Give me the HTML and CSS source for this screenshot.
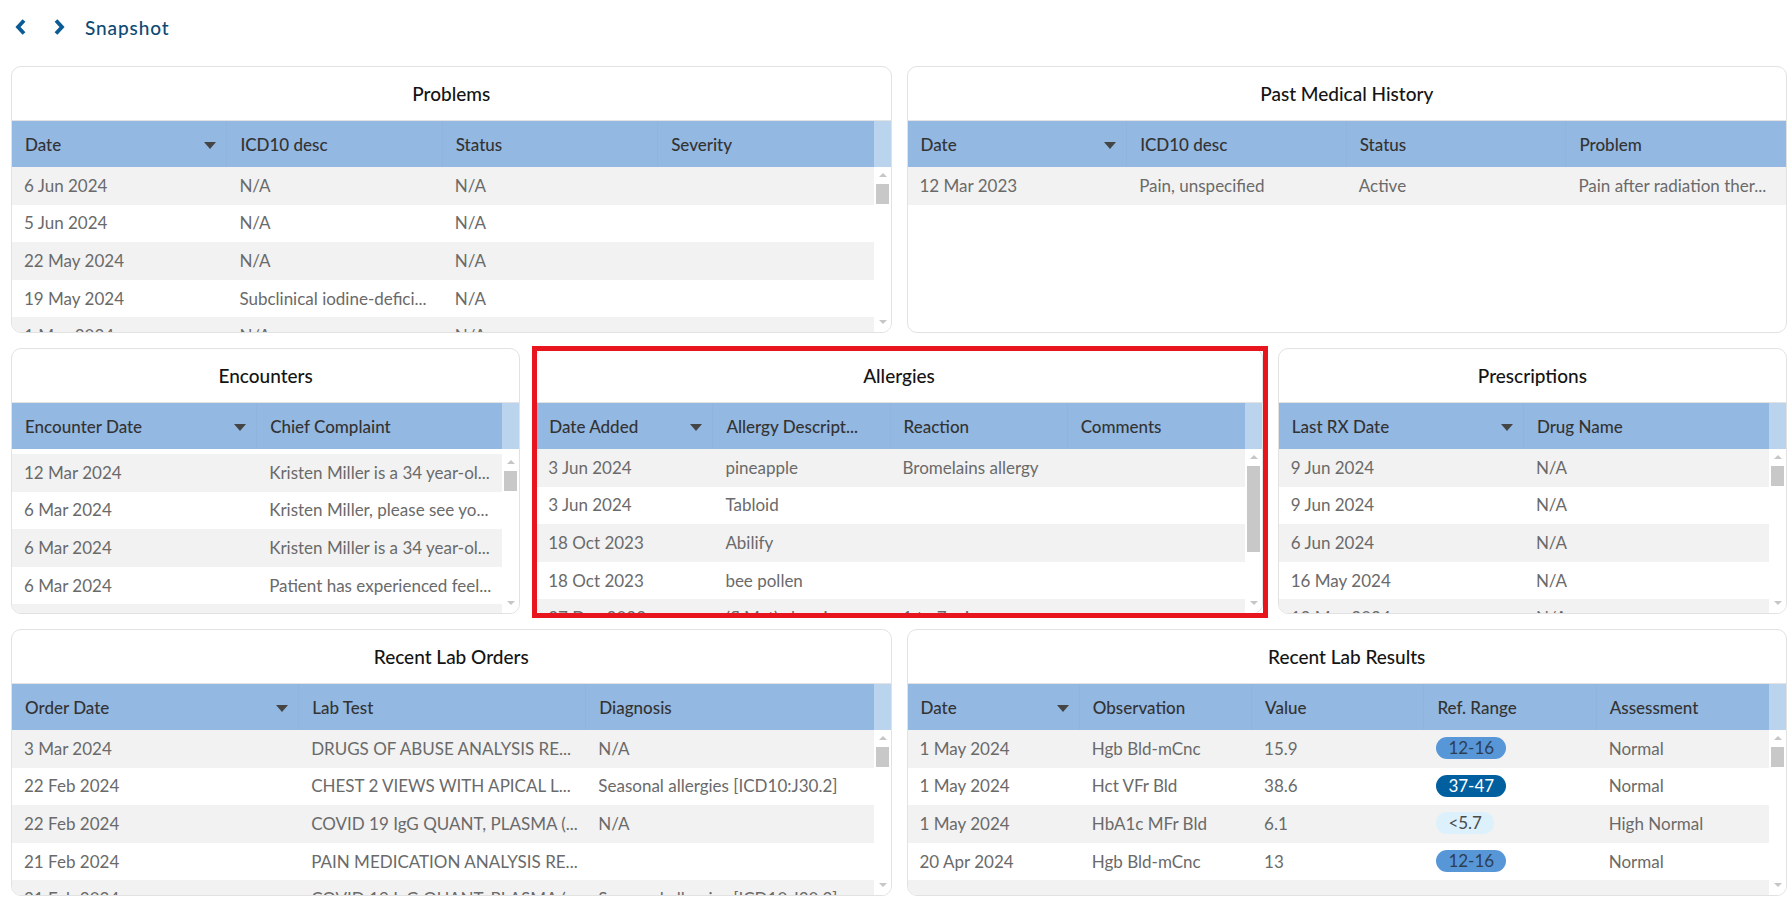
FILE: index.html
```html
<!DOCTYPE html>
<html lang="en">
<head>
<meta charset="utf-8">
<title>Snapshot</title>
<link rel="stylesheet" href="styles.css">
</head>
<body>
<div class="topbar">
  <svg class="chev" width="14" height="16" viewBox="0 0 14 16"><polyline points="10,1.5 4,8 10,14.5" fill="none" stroke="#0b5c94" stroke-width="3.8" stroke-linejoin="miter"/></svg>
  <svg class="chev" width="14" height="16" viewBox="0 0 14 16"><polyline points="4,1.5 10,8 4,14.5" fill="none" stroke="#0b5c94" stroke-width="3.8" stroke-linejoin="miter"/></svg>
  <span class="crumb">Snapshot</span>
</div>

<div class="board">
  <div class="row two">
    <section class="card">
      <h2 class="card-title">Problems</h2>
      <div class="thead">
        <div class="hcols c4">
          <div class="th sort">Date<i class="caret"></i></div>
          <div class="th">ICD10 desc</div>
          <div class="th">Status</div>
          <div class="th">Severity</div>
        </div>
        <div class="hsb"></div>
      </div>
      <div class="tbody">
        <div class="rows">
          <div class="tr c4"><div class="td">6 Jun 2024</div><div class="td">N/A</div><div class="td">N/A</div><div class="td"></div></div>
          <div class="tr c4"><div class="td">5 Jun 2024</div><div class="td">N/A</div><div class="td">N/A</div><div class="td"></div></div>
          <div class="tr c4"><div class="td">22 May 2024</div><div class="td">N/A</div><div class="td">N/A</div><div class="td"></div></div>
          <div class="tr c4"><div class="td">19 May 2024</div><div class="td">Subclinical iodine-defici...</div><div class="td">N/A</div><div class="td"></div></div>
          <div class="tr c4"><div class="td">1 May 2024</div><div class="td">N/A</div><div class="td">N/A</div><div class="td"></div></div>
        </div>
        <div class="vsb"><i class="up"></i><i class="thumb"></i><i class="down"></i></div>
      </div>
    </section>

    <section class="card">
      <h2 class="card-title">Past Medical History</h2>
      <div class="thead">
        <div class="hcols c4">
          <div class="th sort">Date<i class="caret"></i></div>
          <div class="th">ICD10 desc</div>
          <div class="th">Status</div>
          <div class="th">Problem</div>
        </div>
      </div>
      <div class="tbody">
        <div class="rows">
          <div class="tr c4"><div class="td">12 Mar 2023</div><div class="td">Pain, unspecified</div><div class="td">Active</div><div class="td">Pain after radiation ther...</div></div>
        </div>
      </div>
    </section>
  </div>

  <div class="row three">
    <section class="card">
      <h2 class="card-title">Encounters</h2>
      <div class="thead">
        <div class="hcols c2">
          <div class="th sort">Encounter Date<i class="caret"></i></div>
          <div class="th">Chief Complaint</div>
        </div>
        <div class="hsb"></div>
      </div>
      <div class="tbody gap-top">
        <div class="rows">
          <div class="tr c2"><div class="td">12 Mar 2024</div><div class="td">Kristen Miller is a 34 year-ol...</div></div>
          <div class="tr c2"><div class="td">6 Mar 2024</div><div class="td">Kristen Miller, please see yo...</div></div>
          <div class="tr c2"><div class="td">6 Mar 2024</div><div class="td">Kristen Miller is a 34 year-ol...</div></div>
          <div class="tr c2"><div class="td">6 Mar 2024</div><div class="td">Patient has experienced feel...</div></div>
          <div class="tr c2"><div class="td">4 Mar 2024</div><div class="td">Kristen Miller is a 34 year-ol...</div></div>
        </div>
        <div class="vsb"><i class="up"></i><i class="thumb"></i><i class="down"></i></div>
      </div>
    </section>

    <section class="card highlighted">
      <h2 class="card-title">Allergies</h2>
      <div class="thead">
        <div class="hcols c4">
          <div class="th sort">Date Added<i class="caret"></i></div>
          <div class="th">Allergy Descript...</div>
          <div class="th">Reaction</div>
          <div class="th">Comments</div>
        </div>
        <div class="hsb"></div>
      </div>
      <div class="tbody">
        <div class="rows">
          <div class="tr c4"><div class="td">3 Jun 2024</div><div class="td">pineapple</div><div class="td">Bromelains allergy</div><div class="td"></div></div>
          <div class="tr c4"><div class="td">3 Jun 2024</div><div class="td">Tabloid</div><div class="td"></div><div class="td"></div></div>
          <div class="tr c4"><div class="td">18 Oct 2023</div><div class="td">Abilify</div><div class="td"></div><div class="td"></div></div>
          <div class="tr c4"><div class="td">18 Oct 2023</div><div class="td">bee pollen</div><div class="td"></div><div class="td"></div></div>
          <div class="tr c4"><div class="td">27 Dec 2022</div><div class="td">(fl Mat) chemi...</div><div class="td">1 to 7 mi...</div><div class="td"></div></div>
        </div>
        <div class="vsb"><i class="up"></i><i class="thumb big"></i><i class="down"></i></div>
      </div>
      <div class="mark"></div>
    </section>

    <section class="card">
      <h2 class="card-title">Prescriptions</h2>
      <div class="thead">
        <div class="hcols c2">
          <div class="th sort">Last RX Date<i class="caret"></i></div>
          <div class="th">Drug Name</div>
        </div>
        <div class="hsb"></div>
      </div>
      <div class="tbody">
        <div class="rows">
          <div class="tr c2"><div class="td">9 Jun 2024</div><div class="td">N/A</div></div>
          <div class="tr c2"><div class="td">9 Jun 2024</div><div class="td">N/A</div></div>
          <div class="tr c2"><div class="td">6 Jun 2024</div><div class="td">N/A</div></div>
          <div class="tr c2"><div class="td">16 May 2024</div><div class="td">N/A</div></div>
          <div class="tr c2"><div class="td">13 May 2024</div><div class="td">N/A</div></div>
        </div>
        <div class="vsb"><i class="up"></i><i class="thumb"></i><i class="down"></i></div>
      </div>
    </section>
  </div>

  <div class="row two">
    <section class="card">
      <h2 class="card-title">Recent Lab Orders</h2>
      <div class="thead">
        <div class="hcols c3">
          <div class="th sort">Order Date<i class="caret"></i></div>
          <div class="th">Lab Test</div>
          <div class="th">Diagnosis</div>
        </div>
        <div class="hsb"></div>
      </div>
      <div class="tbody">
        <div class="rows">
          <div class="tr c3"><div class="td">3 Mar 2024</div><div class="td">DRUGS OF ABUSE ANALYSIS RE...</div><div class="td">N/A</div></div>
          <div class="tr c3"><div class="td">22 Feb 2024</div><div class="td">CHEST 2 VIEWS WITH APICAL L...</div><div class="td">Seasonal allergies [ICD10:J30.2]</div></div>
          <div class="tr c3"><div class="td">22 Feb 2024</div><div class="td">COVID 19 IgG QUANT, PLASMA (...</div><div class="td">N/A</div></div>
          <div class="tr c3"><div class="td">21 Feb 2024</div><div class="td">PAIN MEDICATION ANALYSIS RE...</div><div class="td"></div></div>
          <div class="tr c3"><div class="td">21 Feb 2024</div><div class="td">COVID 19 IgG QUANT, PLASMA (...</div><div class="td">Seasonal allergies [ICD10:J30.2]</div></div>
        </div>
        <div class="vsb"><i class="up"></i><i class="thumb"></i><i class="down"></i></div>
      </div>
    </section>

    <section class="card">
      <h2 class="card-title">Recent Lab Results</h2>
      <div class="thead">
        <div class="hcols c5">
          <div class="th sort">Date<i class="caret"></i></div>
          <div class="th">Observation</div>
          <div class="th">Value</div>
          <div class="th">Ref. Range</div>
          <div class="th">Assessment</div>
        </div>
        <div class="hsb"></div>
      </div>
      <div class="tbody">
        <div class="rows">
          <div class="tr c5"><div class="td">1 May 2024</div><div class="td">Hgb Bld-mCnc</div><div class="td">15.9</div><div class="td"><span class="pill mid">12-16</span></div><div class="td">Normal</div></div>
          <div class="tr c5"><div class="td">1 May 2024</div><div class="td">Hct VFr Bld</div><div class="td">38.6</div><div class="td"><span class="pill dark">37-47</span></div><div class="td">Normal</div></div>
          <div class="tr c5"><div class="td">1 May 2024</div><div class="td">HbA1c MFr Bld</div><div class="td">6.1</div><div class="td"><span class="pill light">&lt;5.7</span></div><div class="td">High Normal</div></div>
          <div class="tr c5"><div class="td">20 Apr 2024</div><div class="td">Hgb Bld-mCnc</div><div class="td">13</div><div class="td"><span class="pill mid">12-16</span></div><div class="td">Normal</div></div>
          <div class="tr c5"><div class="td"></div><div class="td"></div><div class="td"></div><div class="td"></div><div class="td"></div></div>
        </div>
        <div class="vsb"><i class="up"></i><i class="thumb"></i><i class="down"></i></div>
      </div>
    </section>
  </div>
</div>
</body>
</html>
```

FILE: styles.css
```css
* { box-sizing: border-box; }
html, body { margin: 0; padding: 0; background: #fff; }
body {
  font-family: Lato, "Noto Sans", "Liberation Sans", sans-serif;
  width: 1789px;
  height: 908px;
  overflow: hidden;
}

.topbar {
  height: 54px;
  display: flex;
  align-items: center;
  padding-left: 14px;
}
.chev { display: block; margin-right: 24px; }
.chev + .chev { margin-right: 19px; }
.crumb {
  font-size: 19px;
  font-weight: 500;
  color: #0d4a73;
  letter-spacing: 0.9px;
}

.board {
  margin-top: 12px;
  padding: 0 2px 0 11px;
  display: flex;
  flex-direction: column;
  gap: 15px;
}
.row { display: grid; gap: 15px; height: 267px; min-height: 0; }
.row.two { grid-template-columns: 1fr 1fr; }
.row.three { grid-template-columns: 7fr 10fr 7fr; height: 266px; }

.card {
  position: relative;
  border: 1px solid #e2e2e2;
  border-radius: 10px;
  background: #fff;
  display: flex;
  flex-direction: column;
  min-width: 0;
  min-height: 0;
  height: 100%;
}
.card-title {
  margin: 0;
  height: 54px;
  flex: none;
  display: flex;
  align-items: center;
  justify-content: center;
  font-size: 19px;
  font-weight: 500;
  color: #141414;
  border-bottom: 1px solid #e3e3e3;
  border-radius: 10px 10px 0 0;
}

.thead {
  display: flex;
  height: 46px;
  flex: none;
  background: #93b8e2;
}
.hcols { flex: 1; display: grid; min-width: 0; }
.c2 { grid-template-columns: repeat(2, 1fr); }
.c3 { grid-template-columns: repeat(3, 1fr); }
.c4 { grid-template-columns: repeat(4, 1fr); }
.c5 { grid-template-columns: repeat(5, 1fr); }
.th {
  display: flex;
  align-items: center;
  padding: 0 10px 0 13px;
  font-size: 17px;
  font-weight: 500;
  color: #333;
  white-space: nowrap;
  overflow: hidden;
  border-right: 1px solid #90b4dc;
  min-width: 0;
}
.th:last-child { border-right: none; }
.th.sort { justify-content: space-between; }
.caret {
  width: 0; height: 0;
  border-left: 6px solid transparent;
  border-right: 6px solid transparent;
  border-top: 7px solid #454545;
  margin-top: 2px;
}
.hsb { width: 17px; flex: none; background: #bad4ee; }

.tbody {
  flex: 1;
  display: flex;
  min-height: 0;
  overflow: hidden;
  border-radius: 0 0 9px 9px;
}
.tbody.gap-top { padding-top: 5px; }
.rows { flex: 1; min-width: 0; min-height: 0; overflow: hidden; }
.tr { display: grid; height: 37.6px; background: #fff; }
.tr:nth-child(odd) { background: #f2f2f2; }
.td {
  display: flex;
  align-items: center;
  padding: 0 10px 1px 12px;
  font-size: 17px;
  color: #6a6a6a;
  white-space: nowrap;
  overflow: hidden;
  text-overflow: ellipsis;
  min-width: 0;
}

.vsb {
  width: 17px;
  flex: none;
  background: #fff;
  position: relative;
}
.vsb .up, .vsb .down {
  position: absolute;
  left: 5px;
  width: 0; height: 0;
  border-left: 4px solid transparent;
  border-right: 4px solid transparent;
}
.vsb .up { top: 6px; border-bottom: 4px solid #c6c6c6; }
.vsb .down { bottom: 8px; border-top: 4px solid #c6c6c6; }
.vsb .thumb {
  position: absolute;
  left: 2px;
  top: 17px;
  width: 13px;
  height: 20px;
  background: #c8c8c8;
}
.vsb .thumb.big { height: 86px; }

.pill {
  display: inline-block;
  height: 22px;
  line-height: 22px;
  padding: 0 12px;
  border-radius: 11px;
  font-size: 17px;
}
.pill.mid { background: #5797d8; color: #2e3e52; }
.pill.dark { background: #005f9e; color: #fff; }
.pill.light { background: #dcf1fc; color: #4a4a4a; }

.mark {
  position: absolute;
  left: -4px;
  top: -3px;
  right: -6px;
  bottom: -5px;
  border: 5px solid #e8141e;
  pointer-events: none;
}
```
